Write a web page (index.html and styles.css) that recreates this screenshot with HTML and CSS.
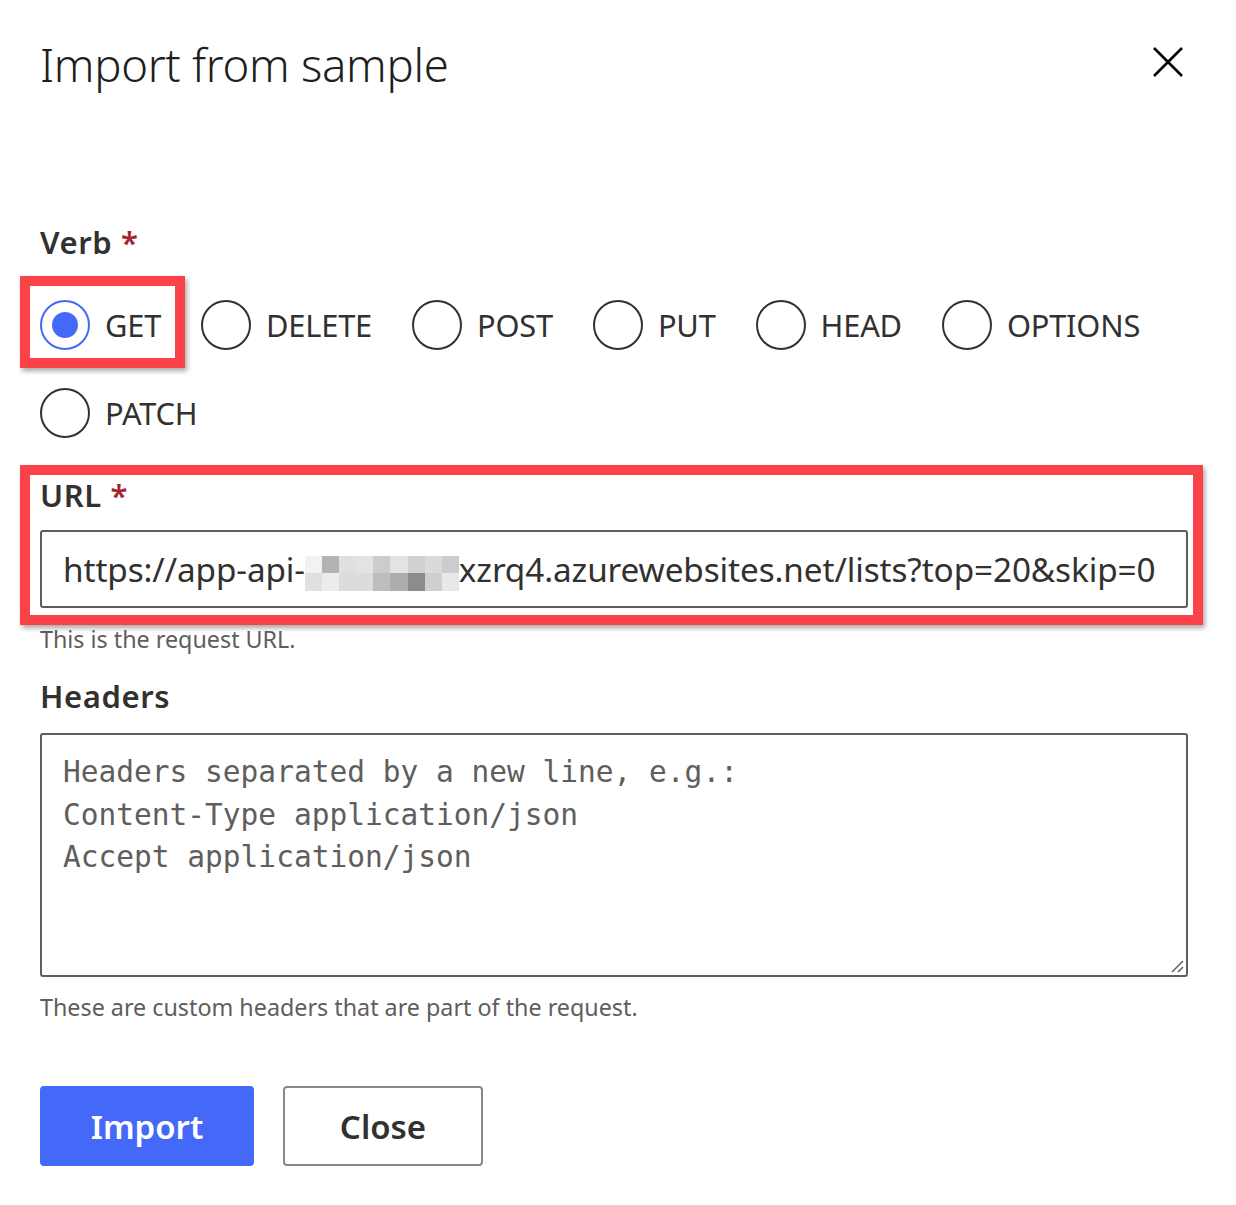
FILE: index.html
```html
<!DOCTYPE html>
<html lang="en">
<head>
<meta charset="utf-8">
<title>Import from sample</title>
<link rel="stylesheet" href="styles.css">
</head>
<body>
<div class="panel">
  <div class="header">
    <h1 class="title">Import from sample</h1>
    <button class="close-x" aria-label="Close">
      <svg width="30" height="30" viewBox="0 0 30 30"><path d="M1 1 L29 29 M29 1 L1 29" stroke="#000" stroke-width="2.6" fill="none"/></svg>
    </button>
  </div>

  <div class="field verb">
    <div class="label">Verb <span class="req">*</span></div>
    <div class="radios">
      <label class="radio checked"><span class="circle"><span class="dot"></span></span><span class="rtext">GET</span></label>
      <label class="radio"><span class="circle"></span><span class="rtext">DELETE</span></label>
      <label class="radio"><span class="circle"></span><span class="rtext">POST</span></label>
      <label class="radio"><span class="circle"></span><span class="rtext">PUT</span></label>
      <label class="radio"><span class="circle"></span><span class="rtext">HEAD</span></label>
      <label class="radio"><span class="circle"></span><span class="rtext">OPTIONS</span></label>
      <label class="radio"><span class="circle"></span><span class="rtext">PATCH</span></label>
    </div>
  </div>

  <div class="field url-field">
    <div class="label">URL <span class="req">*</span></div>
    <div class="input">https://app-api-<span class="pix"><i class="c1"></i><i class="c2"></i><i class="c3"></i><i class="c4"></i><i class="c5"></i><i class="c4"></i><i class="c6"></i><i class="c7"></i><i class="c5"></i><i class="c3"></i><i class="c8"></i><i class="c9"></i><i class="c9"></i><i class="c10"></i><i class="c11"></i><i class="c12"></i><i class="c13"></i><i class="c14"></i></span>xzrq4.azurewebsites.net/lists?top=20&amp;skip=0</div>
  </div>
  <div class="helper helper-url">This is the request URL.</div>

  <div class="field">
    <div class="label headers-label">Headers</div>
    <div class="textarea">
      <div class="ph">Headers separated by a new line, e.g.:<br>Content-Type application/json<br>Accept application/json</div>
      <svg class="grip" width="14" height="14" viewBox="0 0 14 14"><path d="M2 13 L13 2 M8 13 L13 8" stroke="#666" stroke-width="1.6" fill="none"/></svg>
    </div>
  </div>
  <div class="helper helper-headers">These are custom headers that are part of the request.</div>

  <div class="buttons">
    <button class="btn primary">Import</button>
    <button class="btn secondary">Close</button>
  </div>
</div>
</body>
</html>
```
FILE: styles.css
```css
* { box-sizing: border-box; }
html, body { margin: 0; padding: 0; background: #fff; }
body {
  font-family: "Noto Sans", "Open Sans", sans-serif;
  color: #323130;
  width: 1236px;
  height: 1205px;
  overflow: hidden;
}
.panel {
  padding: 32px 48px 0 40px;
  width: 1236px;
}
.header {
  display: flex;
  justify-content: space-between;
  align-items: flex-start;
}
.title {
  margin: 0;
  font-weight: 300;
  font-size: 45.5px;
  line-height: 64px;
  color: #201f1e;
  letter-spacing: -0.3px;
}
.close-x {
  border: 0;
  background: none;
  padding: 0;
  margin: 15px 5px 0 0;
  width: 30px;
  height: 30px;
  display: block;
}
.close-x svg { display: block; }

.label {
  font-weight: 600;
  font-size: 31px;
  line-height: 40px;
  color: #323130;
  letter-spacing: 0.6px;
}
.req { color: #a4262c; font-weight: 600; margin-left: 0; letter-spacing: 0; }

.verb { margin-top: 126px; }
.radios {
  margin-top: 38px;
  display: flex;
  flex-wrap: wrap;
  column-gap: 40px;
  row-gap: 38px;
  width: 1148px;
}
.radio {
  display: flex;
  align-items: center;
  height: 50px;
  position: relative;
}
.circle {
  width: 50px;
  height: 50px;
  border: 2px solid #323130;
  border-radius: 50%;
  display: flex;
  align-items: center;
  justify-content: center;
  flex: none;
}
.radio.checked .circle { border-color: #4468f8; }
.dot { width: 26px; height: 26px; border-radius: 50%; background: #4468f8; }
.rtext {
  margin-left: 15px;
  font-size: 30.8px;
  line-height: 40px;
  color: #323130;
  letter-spacing: -0.2px;
}
.radio.checked::after {
  content: "";
  position: absolute;
  left: -20px;
  top: -24px;
  right: -24px;
  bottom: -18px;
  border: 10px solid #fc4249;
  box-shadow: 2px 3px 5px rgba(0,0,0,0.35);
  pointer-events: none;
}

.url-field {
  margin-top: 37px;
  position: relative;
}
.url-field::after {
  content: "";
  position: absolute;
  left: -20px;
  top: -10px;
  right: -15px;
  bottom: -17px;
  border: 10px solid #fc4249;
  box-shadow: 2px 3px 5px rgba(0,0,0,0.35);
  pointer-events: none;
}
.input {
  margin-top: 15px;
  height: 78px;
  border: 2px solid #605e5c;
  border-radius: 3px;
  padding: 0 0 0 21px;
  display: flex;
  align-items: center;
  font-size: 33.3px;
  color: #323130;
  white-space: nowrap;
  letter-spacing: -0.1px;
}
.pix {
  display: inline-grid;
  grid-template-columns: repeat(9, 17.1px);
  grid-template-rows: 17.5px 17.5px;
  margin-top: 8px;
}
.pix i { display: block; }
.c1 { background: #f2f2f2; }
.c2 { background: #b3b3b3; }
.c3 { background: #e0e0e0; }
.c4 { background: #e3e3e3; }
.c5 { background: #cccccc; }
.c6 { background: #d0d0d0; }
.c7 { background: #dadada; }
.c8 { background: #ececec; }
.c9 { background: #dcdcdc; }
.c10 { background: #bdbdbd; }
.c11 { background: #adadad; }
.c12 { background: #8c8c8c; }
.c13 { background: #cfcfcf; }
.c14 { background: #e8e8e8; }

.helper {
  font-size: 23.3px;
  line-height: 32px;
  color: #605e5c;
}
.helper-url { margin-top: 15px; }
.helper-url + .field { margin-top: 21px; }
.textarea {
  margin-top: 17px;
  height: 244px;
  border: 2px solid #605e5c;
  border-radius: 3px;
  padding: 16px 0 0 21px;
  position: relative;
}
.ph {
  font-family: "DejaVu Sans Mono", "Liberation Mono", monospace;
  font-size: 29.5px;
  line-height: 42.5px;
  color: #605e5c;
}
.grip { position: absolute; right: 2px; bottom: 2px; }
.helper-headers { margin-top: 14px; }

.buttons {
  margin-top: 63px;
  display: flex;
  gap: 29px;
}
.btn {
  height: 80px;
  font-family: "Noto Sans", "Open Sans", sans-serif;
  font-weight: 600;
  font-size: 33px;
  border-radius: 4px;
  padding: 0;
}
.primary {
  width: 214px;
  background: #4468f8;
  color: #fff;
  border: 0;
}
.secondary {
  width: 200px;
  background: #fff;
  color: #323130;
  border: 2px solid #8a8886;
}
```
